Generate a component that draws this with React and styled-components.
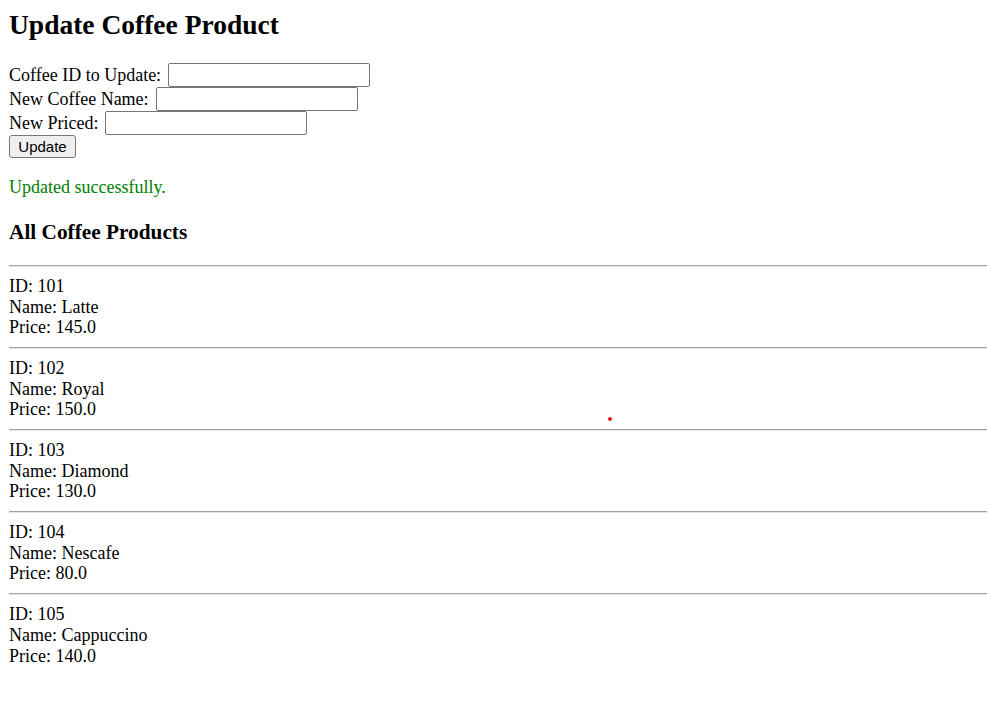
import React from 'react';
import styled, { createGlobalStyle } from 'styled-components';

const GlobalStyle = createGlobalStyle`
  body {
    margin: 9px 0 9px 9px;
    font-family: "Liberation Serif", "Times New Roman", serif;
    font-size: 18px;
    color: #000;
    background: #fff;
  }
`;

const Page = styled.div`
  position: relative;
`;

const Title = styled.h2`
  font-size: 27.5px;
  line-height: 31px;
  font-weight: bold;
  margin: 0 0 23px;
`;

const Form = styled.form`
  display: flex;
  flex-direction: column;
  align-items: flex-start;
`;

const Field = styled.label`
  display: flex;
  align-items: center;
  height: 24px;
`;

const LabelText = styled.span`
  margin-right: 7px;
`;

const Input = styled.input`
  box-sizing: border-box;
  width: 202px;
  height: 24px;
  border: 1px solid #767676;
  border-radius: 2px;
  padding: 1px 2px;
  font-family: "Liberation Sans", Arial, sans-serif;
  font-size: 15px;
  background: #fff;
`;

const Button = styled.button`
  box-sizing: border-box;
  width: 67px;
  height: 23px;
  padding: 0;
  border: 1px solid #767676;
  border-radius: 3px;
  background: #efefef;
  color: #000;
  font-family: "Liberation Sans", Arial, sans-serif;
  font-size: 15px;
`;

const Message = styled.p`
  color: green;
  margin: 19px 0 18px;
`;

const SectionTitle = styled.h3`
  font-size: 21.3px;
  line-height: 24.1px;
  font-weight: bold;
  margin: 22px 0 21px;
`;

const Divider = styled.hr`
  height: 0;
  margin: 9px 0;
  border: 0;
  border-top: 1px solid #a0a0a0;
  border-bottom: 1px solid #e6e6e6;
`;

const Product = styled.div`
  display: flex;
  flex-direction: column;
  line-height: 20.67px;
`;

const Dot = styled.span`
  position: absolute;
  left: 599px;
  top: 408px;
  width: 4px;
  height: 4px;
  border-radius: 50%;
  background: #e8141c;
`;

const products = [
  { id: 101, name: 'Latte', price: '145.0' },
  { id: 102, name: 'Royal', price: '150.0' },
  { id: 103, name: 'Diamond', price: '130.0' },
  { id: 104, name: 'Nescafe', price: '80.0' },
  { id: 105, name: 'Cappuccino', price: '140.0' },
];

export default function App() {
  return (
    <Page>
      <GlobalStyle />
      <Title>Update Coffee Product</Title>
      <Form onSubmit={e => e.preventDefault()}>
        <Field>
          <LabelText>Coffee ID to Update:</LabelText>
          <Input type="text" />
        </Field>
        <Field>
          <LabelText>New Coffee Name:</LabelText>
          <Input type="text" />
        </Field>
        <Field>
          <LabelText>New Priced:</LabelText>
          <Input type="text" />
        </Field>
        <Button type="submit">Update</Button>
      </Form>
      <Message>Updated successfully.</Message>
      <SectionTitle>All Coffee Products</SectionTitle>
      {products.map(p => (
        <React.Fragment key={p.id}>
          <Divider />
          <Product>
            <span>ID: {p.id}</span>
            <span>Name: {p.name}</span>
            <span>Price: {p.price}</span>
          </Product>
        </React.Fragment>
      ))}
      <Dot />
    </Page>
  );
}
